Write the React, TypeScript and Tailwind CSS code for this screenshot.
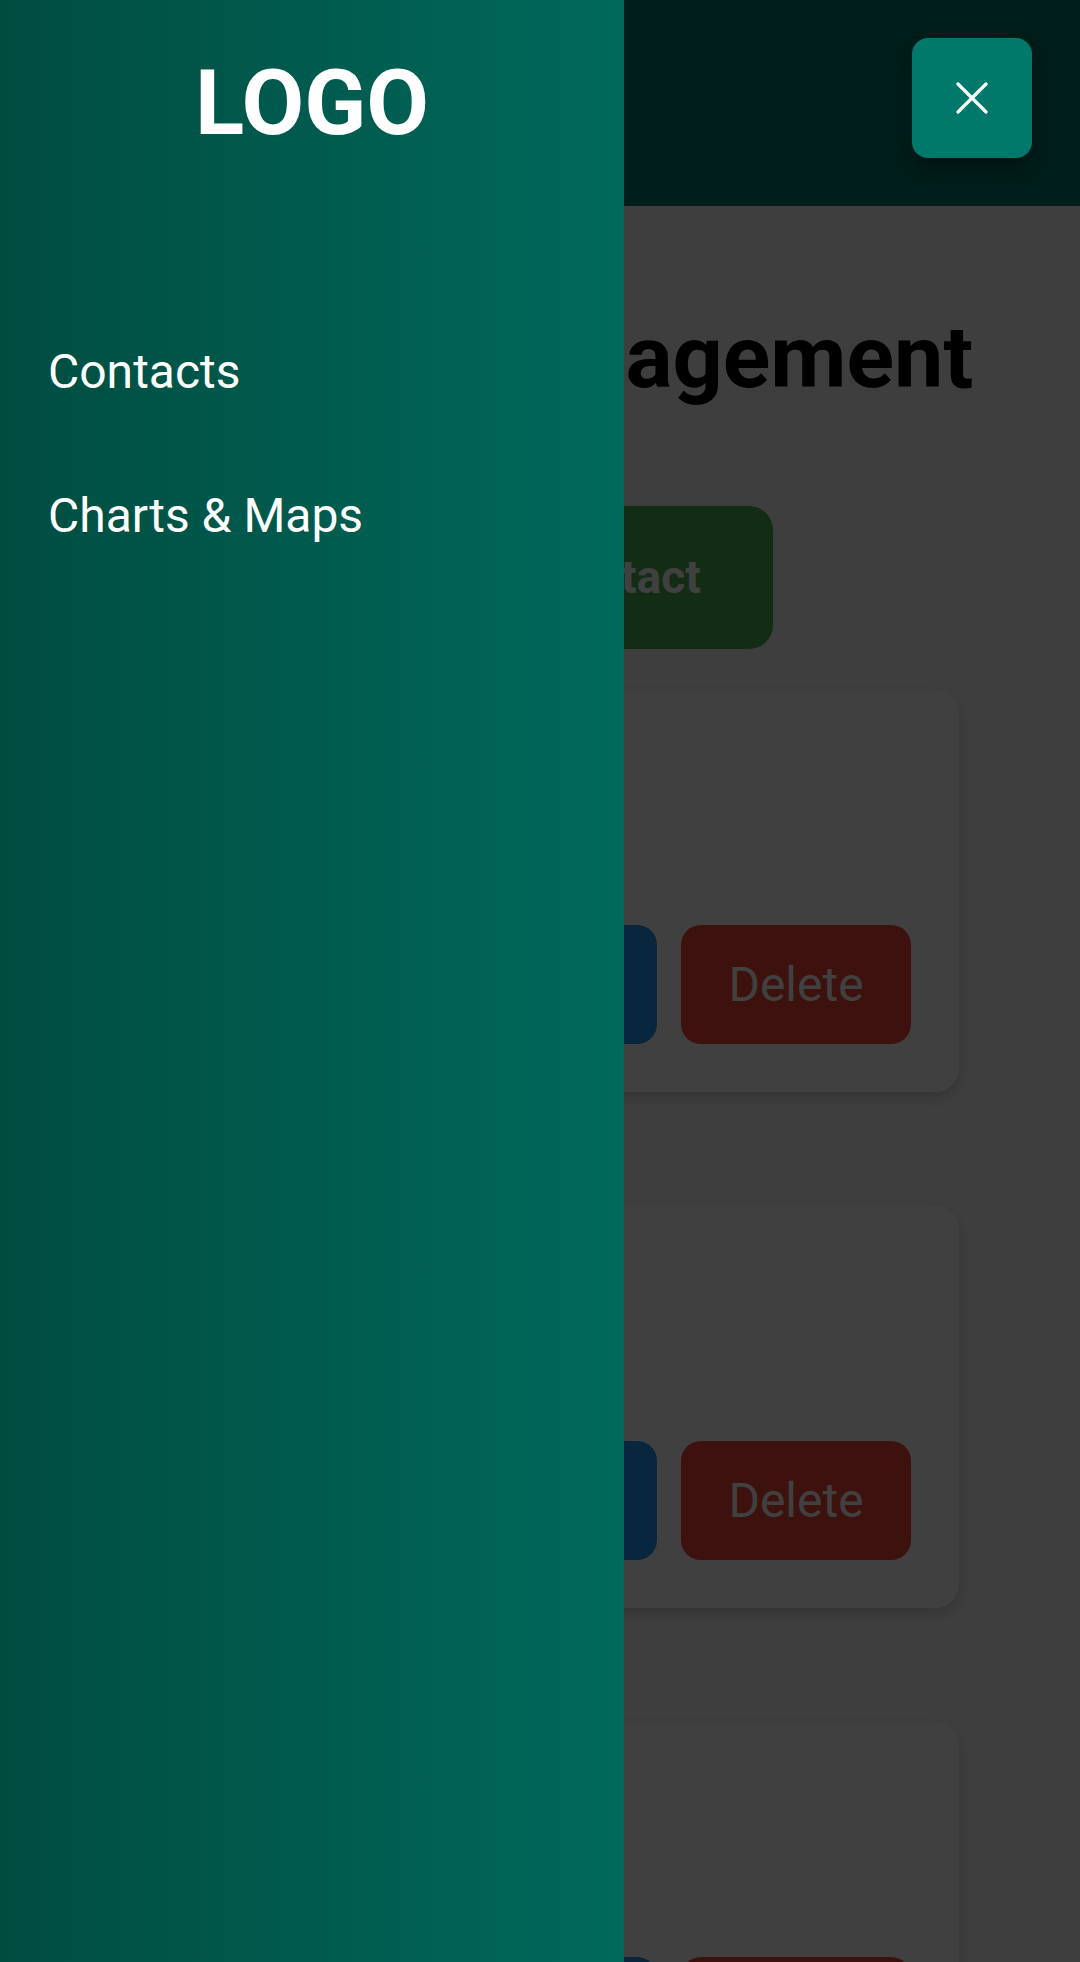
import { useState } from 'react'

type Contact = { id: number; name: string; email: string; phone: string }

const contacts: Contact[] = [
  { id: 1, name: 'John Doe', email: 'john@mail.com', phone: '555-0134' },
  { id: 2, name: 'Jane Smith', email: 'jane@mail.com', phone: '555-0178' },
  { id: 3, name: 'Sam Lee', email: 'sam@mail.com', phone: '555-0192' },
]

function CloseIcon() {
  return (
    <svg width="32" height="32" viewBox="0 0 32 32" fill="none" stroke="white" strokeWidth="3.2" strokeLinecap="round">
      <line x1="2" y1="2" x2="30" y2="30" />
      <line x1="30" y1="2" x2="2" y2="30" />
    </svg>
  )
}

function ContactCard({ contact }: { contact: Contact }) {
  return (
    <div className="rounded-[24px] bg-white p-12 shadow-[0_6px_12px_rgba(0,0,0,0.14)] h-[403px] flex flex-col">
      <div className="flex-1 text-[#222]">
        <p className="text-[48px] leading-[56px] font-bold">{contact.name}</p>
        <p className="text-[40px] leading-[56px]">{contact.email}</p>
        <p className="text-[40px] leading-[56px]">{contact.phone}</p>
      </div>
      <div className="flex justify-end gap-6">
        <button className="w-[230px] h-[119px] rounded-[20px] bg-[#2196f3] text-white text-[48px]">Edit</button>
        <button className="w-[230px] h-[119px] rounded-[20px] bg-[#f44336] text-white text-[48px]">Delete</button>
      </div>
    </div>
  )
}

export default function App() {
  const [open, setOpen] = useState(true)

  return (
    <div className="relative min-h-[1962px] bg-[#f5f5f5] font-[Roboto,sans-serif] overflow-hidden">
      {/* Header */}
      <header className="h-[206px] bg-[#00796b] flex items-start justify-end px-12 pt-[38px]">
        <button
          onClick={() => setOpen(!open)}
          className="relative z-30 w-[120px] h-[120px] rounded-[16px] bg-[#00796b] flex items-center justify-center shadow-[0_10px_20px_rgba(0,0,0,0.35)]"
        >
          <CloseIcon />
        </button>
      </header>

      <main className="px-[121px] pb-20">
        <h1 className="mt-[107px] text-center text-[88px] leading-none font-bold text-black whitespace-nowrap">
          Contact Management
        </h1>
        <button className="mt-[105px] ml-[252px] h-[143px] px-[72px] rounded-[24px] bg-[#4caf50] text-white text-[46px] font-bold">
          Add Contact
        </button>
        <div className="mt-10 space-y-[113px]">
          {contacts.map((c) => (
            <ContactCard key={c.id} contact={c} />
          ))}
        </div>
      </main>

      {open && (
        <>
          <div className="fixed inset-0 z-10 bg-black/75" onClick={() => setOpen(false)} />
          <aside className="fixed inset-y-0 left-0 z-20 w-[624px] bg-gradient-to-r from-[#004d40] to-[#00695c] text-white">
            <div className="h-[206px] flex items-center justify-center text-[91px] leading-none font-bold">LOGO</div>
            <nav className="pt-[94px]">
              {['Contacts', 'Charts & Maps'].map((item) => (
                <a key={item} href="#" className="block px-12 py-[44px] text-[48px] leading-[56px]">
                  {item}
                </a>
              ))}
            </nav>
          </aside>
        </>
      )}
    </div>
  )
}
